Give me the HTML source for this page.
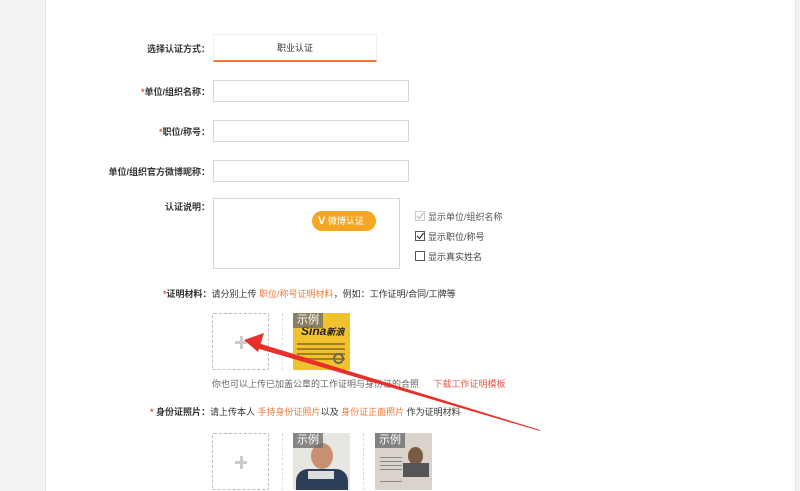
<!DOCTYPE html>
<html><head><meta charset="utf-8"><style>
*{margin:0;padding:0;box-sizing:border-box}
body{width:800px;height:491px;overflow:hidden;background:#f4f3f1;font-family:"Liberation Sans","Noto Sans CJK SC",sans-serif;font-size:9px;color:#333;position:relative}
.main{position:absolute;left:45px;top:0;width:751px;height:491px;background:#fff;border-left:1px solid #e4e4e4;border-right:1px solid #e4e4e4}
.a{position:absolute}
.lbl{position:absolute;right:590px;font-weight:bold;white-space:nowrap;text-align:right;width:200px}
.r{color:#e85a4a}
.inp{position:absolute;left:213px;width:196px;height:22px;border:1px solid #d8d8d8;background:#fff}
.o{color:#f07a3a}
.up{position:absolute;width:57px;height:57px;border:1px dashed #bbb;border-radius:2px}
.up:before{content:"";position:absolute;left:22px;top:27px;width:12px;height:3px;background:#ccc}
.up:after{content:"";position:absolute;left:26.5px;top:22px;width:3px;height:13px;background:#ccc}
.vd{position:absolute;width:0;border-left:1px dashed #ddd;height:57px}
.img{position:absolute;width:57px;height:57px;overflow:hidden}
.tag{position:absolute;left:0;top:0;background:rgba(110,110,110,.8);color:#fff;font-size:11px;padding:0 4px;line-height:15px}
.cb{position:absolute;left:415px;width:10px;height:10px;border:1px solid #555;background:#fff}
.ct{position:absolute;left:428px;color:#444}
</style></head><body>
<div class="main"></div>
<div class="lbl" style="top:42px">选择认证方式：</div>
<div class="a" style="left:213px;top:34px;width:164px;height:28px;border:1px solid #eee;border-bottom:2px solid #f07a3a;text-align:center;line-height:26px">职业认证</div>
<div class="lbl" style="top:85px"><span class="r">*</span>单位/组织名称：</div>
<div class="inp" style="top:80px"></div>
<div class="lbl" style="top:125px"><span class="r">*</span>职位/称号：</div>
<div class="inp" style="top:120px"></div>
<div class="lbl" style="top:165px">单位/组织官方微博昵称：</div>
<div class="inp" style="top:160px"></div>
<div class="lbl" style="top:200px">认证说明：</div>
<div class="a" style="left:213px;top:198px;width:187px;height:71px;border:1px solid #d8d8d8"></div>
<div class="a" style="left:312px;top:211px;width:64px;height:20px;border-radius:10px;background:#f5a623;color:#fff;line-height:20px;padding-left:6px"><b style="font-size:11px">V</b> 微博认证</div>
<div class="cb" style="top:211px;border-color:#ccc"><svg width="8" height="8" style="position:absolute;left:0;top:0"><path d="M1 4 L3.5 6.5 L7.5 1" stroke="#bbb" fill="none" stroke-width="1.2"/></svg></div>
<div class="ct" style="top:210px;color:#555">显示单位/组织名称</div>
<div class="cb" style="top:231px"><svg width="8" height="8" style="position:absolute;left:0;top:0"><path d="M1 4 L3.5 6.5 L7.5 1" stroke="#333" fill="none" stroke-width="1.2"/></svg></div>
<div class="ct" style="top:230px">显示职位/称号</div>
<div class="cb" style="top:251px"></div>
<div class="ct" style="top:250px">显示真实姓名</div>
<div class="a" style="left:163px;top:287px;white-space:nowrap"><b><span class="r">*</span>证明材料：</b>请分别上传 <span class="o">职位/称号证明材料</span>，例如：工作证明/合同/工牌等</div>
<div class="up" style="left:212px;top:313px"></div>
<div class="vd" style="left:282px;top:313px"></div>
<div class="img" style="left:293px;top:313px;background:#f2c12e">
<div style="position:absolute;left:8px;top:11px;font:bold italic 12px 'Liberation Sans';color:#222">Sina<span style="font-size:9px">新浪</span></div>
<div style="position:absolute;left:4px;top:30px;width:48px;height:2px;background:#a08020;box-shadow:0 5px #a08020,0 10px #a08020,0 15px #a08020"></div>
<div style="position:absolute;left:40px;top:40px;width:11px;height:11px;border:2px solid #666;border-radius:50%"></div>
<div class="tag">示例</div></div>
<div class="a" style="left:212px;top:377px;color:#666;white-space:nowrap">你也可以上传已加盖公章的工作证明与身份证的合照 <span class="r" style="margin-left:12px">下载工作证明模板</span></div>
<div class="a" style="left:150px;top:405px;white-space:nowrap"><b><span class="r">*</span> 身份证照片：</b>请上传本人 <span class="o">手持身份证照片</span>以及 <span class="o">身份证正面照片</span> 作为证明材料</div>
<div class="up" style="left:212px;top:433px"></div>
<div class="vd" style="left:282px;top:433px"></div>
<div class="img" style="left:293px;top:433px;background:#e8e6e0">
<div style="position:absolute;left:18px;top:10px;width:22px;height:26px;border-radius:50%;background:#c89070"></div>
<div style="position:absolute;left:3px;top:36px;width:52px;height:24px;border-radius:12px 12px 0 0;background:#2c3e58"></div>
<div style="position:absolute;left:15px;top:38px;width:26px;height:8px;background:#ddd"></div>
<div class="tag">示例</div></div>
<div class="vd" style="left:363px;top:433px"></div>
<div class="img" style="left:375px;top:433px;background:#d9d3cc">
<div style="position:absolute;left:33px;top:14px;width:15px;height:18px;border-radius:50%;background:#7a5a40"></div>
<div style="position:absolute;left:28px;top:30px;width:26px;height:14px;background:#555"></div>
<div style="position:absolute;left:5px;top:24px;width:22px;height:1px;background:#888;box-shadow:0 4px #888,0 8px #888,0 12px #888,0 24px #888"></div>
<div class="tag">示例</div></div>
<svg class="a" style="left:0;top:0" width="800" height="491"><path d="M258 343 L540 430 L540 431 L256 348 Z" fill="#e8302a"/><path d="M244 340 L264 333 L258 352 Z" fill="#e8302a"/></svg>
</body></html>
